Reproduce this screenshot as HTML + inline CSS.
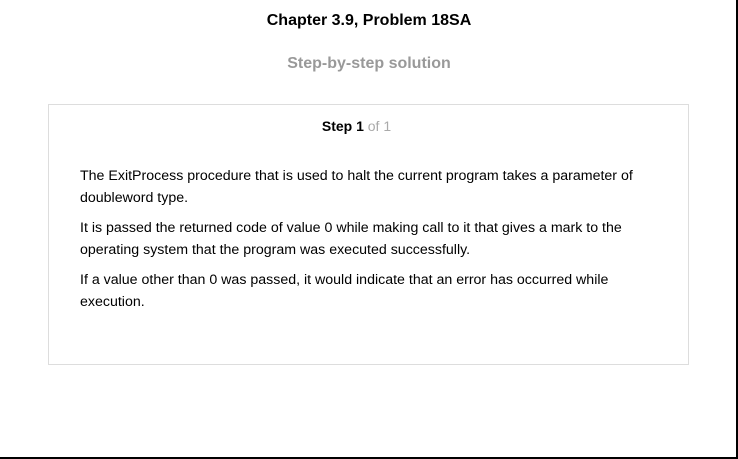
<!DOCTYPE html>
<html><head><style>
html,body{margin:0;padding:0;background:#fff;}
body{width:738px;height:459px;position:relative;overflow:hidden;font-family:"Liberation Sans",Arial,sans-serif;color:#000;}
.frame{position:absolute;left:0;top:0;width:736px;height:457px;border-right:2px solid #000;border-bottom:2px solid #000;}
h1{position:absolute;left:0;width:738px;top:12px;margin:0;text-align:center;font-size:16px;font-weight:bold;line-height:18px;}
h2{position:absolute;left:0;width:738px;top:55px;margin:0;text-align:center;font-size:16px;font-weight:bold;color:#999;line-height:18px;}
.box{position:absolute;left:48px;top:104px;width:639px;height:259px;border:1px solid #ddd;}
.step{position:absolute;top:13px;left:-12px;width:100%;text-align:center;font-size:14px;line-height:16px;}
.step span{color:#aaa;}
.body{position:absolute;left:31px;top:60px;width:590px;font-size:14.2px;line-height:22px;}
.body p{margin:0 0 8px 0;}
</style></head><body>
<div class="frame"></div>
<h1>Chapter 3.9, Problem 18SA</h1>
<h2>Step-by-step solution</h2>
<div class="box">
<div class="step"><b>Step 1</b> <span>of 1</span></div>
<div class="body">
<p>The ExitProcess procedure that is used to halt the current program takes a parameter of doubleword type.</p>
<p>It is passed the returned code of value 0 while making call to it that gives a mark to the operating system that the program was executed successfully.</p>
<p>If a value other than 0 was passed, it would indicate that an error has occurred while execution.</p>
</div>
</div>
</body></html>
